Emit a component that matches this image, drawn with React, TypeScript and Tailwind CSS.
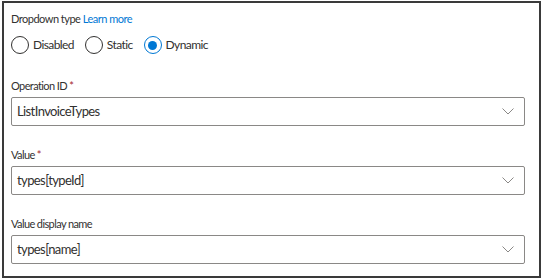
import React from 'react';

const font = { fontFamily: 'Lato, "Open Sans", Arial, sans-serif' };

const Chevron = () => (
  <svg width="12" height="7" viewBox="0 0 12 7" fill="none" className="text-[#8a8886]">
    <path d="M0.5 0.5l5.5 5.5 5.5-5.5" stroke="currentColor" strokeWidth="1" />
  </svg>
);

const Radio = ({ label, checked }: { label: string; checked?: boolean }) => (
  <label className="flex items-center gap-[4px]">
    <span
      className={`w-[18px] h-[18px] rounded-full border flex items-center justify-center ${
        checked ? 'border-[#0078d4]' : 'border-[#323130]'
      }`}
    >
      {checked && <span className="w-[9px] h-[9px] rounded-full bg-[#0078d4]" />}
    </span>
    <span className="text-[12px] tracking-[-0.6px] text-[#323130]">{label}</span>
  </label>
);

const Field = ({ label, required, value }: { label: string; required?: boolean; value: string }) => (
  <div className="flex flex-col gap-[3px]">
    <div className="text-[11px] leading-[16px] tracking-[-0.6px] text-[#323130]">
      {label}
      {required && <span className="text-[#a4262c]"> *</span>}
    </div>
    <div className="h-[29px] border border-[#8a8886] rounded-[2px] flex items-center justify-between pl-[5px] pr-[10px]">
      <span className="text-[13px] tracking-[-0.6px] text-[#323130]">{value}</span>
      <Chevron />
    </div>
  </div>
);

export default function App() {
  return (
    <div className="w-[543px] h-[279px] bg-white pt-[1px] pl-[2px]" style={font}>
      <div className="w-[539px] h-[277px] border-2 border-[#3a3a3a] pt-[8px] pl-[7px] pr-[14px]">
        <div className="text-[11px] leading-[16px] tracking-[-0.5px] text-[#323130]">
          Dropdown type <span className="text-[#0078d4]">Learn more</span>
        </div>
        <div className="flex items-center gap-[11px] mt-[9px] h-[18px]">
          <Radio label="Disabled" />
          <Radio label="Static" />
          <Radio label="Dynamic" checked />
        </div>
        <div className="flex flex-col gap-[21px] mt-[24px]">
          <Field label="Operation ID" required value="ListInvoiceTypes" />
          <Field label="Value" required value="types[typeId]" />
          <Field label="Value display name" value="types[name]" />
        </div>
      </div>
    </div>
  );
}
